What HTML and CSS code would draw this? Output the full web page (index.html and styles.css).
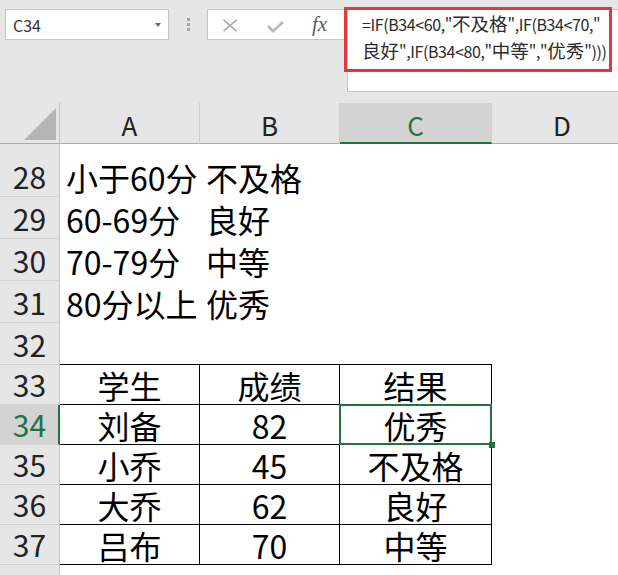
FILE: index.html
```html
<!DOCTYPE html>
<html lang="zh-CN">
<head>
<meta charset="utf-8">
<title>Excel</title>
<link rel="stylesheet" href="styles.css">
</head>
<body>
<div class="app">
  <div class="ribbon">
    <div class="namebox"><span class="name">C34</span><span class="caret"></span></div>
    <div class="grip"><i></i><i></i><i></i></div>
    <div class="fxbox">
      <svg class="ico-x" width="16" height="13" viewBox="0 0 16 13"><path d="M1.5 0.8 L14.5 12.2 M14.5 0.8 L1.5 12.2" stroke="#a9a9a9" stroke-width="1.6" fill="none"/></svg>
      <svg class="ico-ok" width="17" height="12" viewBox="0 0 17 12"><path d="M1 5 L6 10.2 L16 1" stroke="#b9b9b9" stroke-width="2.6" fill="none"/></svg>
      <span class="fx">fx</span>
    </div>
    <div class="formula">
      <div class="formula-text">=IF(B34&lt;60,"<span class="hz">不及格</span>",IF(B34&lt;70,"<br><span class="hz">良好</span>",IF(B34&lt;80,"<span class="hz">中等</span>","<span class="hz">优秀</span>")))</div>
    </div>
    <div class="callout"></div>
  </div>

  <div class="sheet">
    <div class="corner"><span class="tri"></span></div>
    <div class="ch">A</div>
    <div class="ch">B</div>
    <div class="ch sel">C</div>
    <div class="ch">D</div>

    <div class="rh">28</div>
    <div class="c">小于60分</div>
    <div class="c">不及格</div>
    <div class="c"></div>
    <div class="c"></div>

    <div class="rh">29</div>
    <div class="c">60-69分</div>
    <div class="c">良好</div>
    <div class="c"></div>
    <div class="c"></div>

    <div class="rh">30</div>
    <div class="c">70-79分</div>
    <div class="c">中等</div>
    <div class="c"></div>
    <div class="c"></div>

    <div class="rh">31</div>
    <div class="c">80分以上</div>
    <div class="c">优秀</div>
    <div class="c"></div>
    <div class="c"></div>

    <div class="rh">32</div>
    <div class="c above"></div>
    <div class="c above"></div>
    <div class="c above"></div>
    <div class="c"></div>

    <div class="rh">33</div>
    <div class="c t">学生</div>
    <div class="c t">成绩</div>
    <div class="c t">结果</div>
    <div class="c"></div>

    <div class="rh sel">34</div>
    <div class="c t">刘备</div>
    <div class="c t">82</div>
    <div class="c t active">优秀</div>
    <div class="c"></div>

    <div class="rh">35</div>
    <div class="c t">小乔</div>
    <div class="c t">45</div>
    <div class="c t">不及格</div>
    <div class="c"></div>

    <div class="rh">36</div>
    <div class="c t">大乔</div>
    <div class="c t">62</div>
    <div class="c t">良好</div>
    <div class="c"></div>

    <div class="rh">37</div>
    <div class="c t">吕布</div>
    <div class="c t">70</div>
    <div class="c t">中等</div>
    <div class="c"></div>

    <div class="rh"></div>
    <div class="c"></div>
    <div class="c"></div>
    <div class="c"></div>
    <div class="c"></div>
  </div>
</div>
</body>
</html>
```
FILE: styles.css
```css
* { box-sizing: border-box; }
html, body { margin: 0; padding: 0; }
body {
  width: 618px;
  height: 575px;
  overflow: hidden;
  background: #e6e6e6;
  font-family: "Noto Sans CJK SC", "Noto Sans", sans-serif;
}
.app { width: 618px; height: 575px; overflow: hidden; }

/* ---------- formula bar ---------- */
.ribbon {
  position: relative;
  height: 103px;
  display: flex;
  align-items: flex-start;
  padding: 9px 0 0 5px;
  background: #e6e6e6;
}
.namebox {
  flex: 0 0 164px;
  height: 31px;
  background: #fff;
  border: 1px solid #c6c6c6;
  display: flex;
  align-items: center;
  justify-content: space-between;
  padding: 0 7px 0 7px;
}
.name { font-size: 16px; color: #333; line-height: 1; }
.caret {
  width: 0; height: 0;
  border-left: 3.5px solid transparent;
  border-right: 3.5px solid transparent;
  border-top: 4px solid #6a6a6a;
}
.grip {
  flex: 0 0 38px;
  height: 31px;
  display: flex;
  flex-direction: column;
  align-items: center;
  gap: 2px;
  padding-top: 9px;
}
.grip i { display: block; width: 3px; height: 3px; background: #a5a5a5; }
.fxbox {
  flex: 0 0 140px;
  height: 31px;
  background: #fff;
  border: 1px solid #c6c6c6;
  border-right: none;
  display: flex;
  align-items: center;
  padding-left: 14px;
}
.ico-x { margin-top: 2px; flex: none; }
.ico-ok { margin-left: 29px; margin-top: 5px; flex: none; }
.fx {
  margin-left: 28px;
  font-family: "Liberation Serif", "DejaVu Serif", serif;
  font-style: italic;
  font-size: 21px;
  color: #5c5c5c;
  line-height: 1;
  margin-top: -1px;
}
.formula {
  flex: 1 1 auto;
  min-width: 0;
  height: 83px;
  background: #fff;
  border: 1px solid #c6c6c6;
  border-right: none;
  padding: 1px 0 0 14px;
  overflow: hidden;
}
.formula-text {
  font-size: 16px;
  letter-spacing: -0.4px;
  line-height: 27px;
  color: #2b2b2b;
  white-space: nowrap;
}
.hz { font-size: 18.5px; line-height: 1; letter-spacing: 0; }
.callout {
  position: absolute;
  left: 344px;
  top: 7px;
  width: 268px;
  height: 65px;
  border: 3px solid #e5383d;
}

/* ---------- sheet ---------- */
.sheet {
  display: grid;
  grid-template-columns: 60px 140px 140px 152px 141px;
  grid-template-rows: 41px 53px 42px 42px 42px 42px 40px 40px 40px 40px 40px 30px;
  background: #fff;
}
.corner {
  background: #e6e6e6;
  border-right: 1px solid #c4c4c4;
  border-bottom: 1px solid #ababab;
  display: flex;
  align-items: flex-end;
  justify-content: flex-end;
  padding: 0 3px 3px 0;
}
.tri {
  width: 32px;
  height: 32px;
  background: #b4b4b4;
  clip-path: polygon(100% 0, 100% 100%, 0 100%);
}
.ch {
  background: #e6e6e6;
  border-right: 1px solid #cdcdcd;
  border-bottom: 1px solid #ababab;
  font-size: 26px;
  line-height: 37px;
  padding-top: 3px;
  text-align: center;
  color: #222;
}
.ch.sel {
  background: #d3d3d3;
  color: #217346;
  border-bottom: 2px solid #217346;
}
.rh {
  background: #e6e6e6;
  border-right: 1px solid #c4c4c4;
  border-bottom: 1px solid #d2d2d2;
  font-size: 30px;
  line-height: 38px;
  padding-bottom: 1px;
  color: #222;
  display: flex;
  align-items: flex-end;
  justify-content: center;
}
.rh.sel {
  background: #d3d3d3;
  color: #217346;
  border-right: 2px solid #217346;
  padding-left: 1px;
}
.c {
  font-size: 32px;
  line-height: 38px;
  padding-bottom: 1px;
  color: #000;
  white-space: nowrap;
  display: flex;
  align-items: flex-end;
  padding-left: 6px;
}
.c.above { border-bottom: 1px solid #000; }
.c.t {
  justify-content: center;
  padding-left: 0;
  padding-bottom: 0;
  border-right: 1px solid #000;
  border-bottom: 1px solid #000;
}
.c.active { position: relative; }
.c.active::after {
  content: "";
  position: absolute;
  left: -1px;
  top: -1px;
  right: -1px;
  bottom: -1px;
  border: 2px solid #217346;
}
.c.active::before {
  content: "";
  position: absolute;
  right: -4px;
  bottom: -4px;
  width: 6px;
  height: 6px;
  background: #217346;
  z-index: 1;
}
```
